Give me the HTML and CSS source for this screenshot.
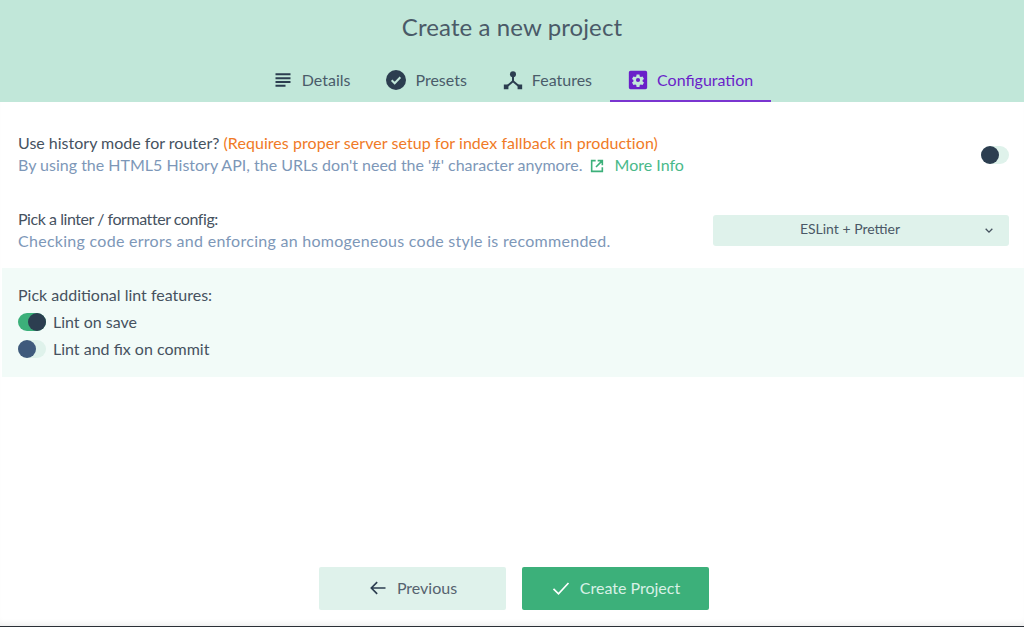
FILE: index.html
```html
<!DOCTYPE html>
<html lang="en">
<head>
    <meta charset="UTF-8">
    <title>Create a new project</title>
    <link rel="stylesheet" href="styles.css">
</head>
<body>

<header class="header">
    <h1 class="title">Create a new project</h1>
    <nav class="tabs">
        <div class="tab">
            <svg class="tab-icon" viewBox="0 0 24 24"><path d="M3 4h18v2.400H3zM3 8.600h18V11H3zM3 13.200h18v2.400H3zM3 17.800h12v2.400H3z"/></svg>
            <span>Details</span>
        </div>
        <div class="tab">
            <svg class="tab-icon" viewBox="0 0 24 24"><circle cx="12" cy="12" r="12"/><path class="tick" d="M6.800 12.300l3.600 3.600 6.800-7.200"/></svg>
            <span>Presets</span>
        </div>
        <div class="tab">
            <svg class="tab-icon" viewBox="0 0 24 24"><circle cx="12" cy="5" r="3.600"/><path d="M10.800 7h2.400v6l6 5-1.500 1.800L12 15l-5.700 4.800L4.800 18l6-5z"/><path d="M1 17.500h5.500V23H1zM17.500 17.500H23V23h-5.500z"/></svg>
            <span>Features</span>
        </div>
        <div class="tab active">
            <svg class="tab-icon" viewBox="0 0 24 24"><path fill-rule="evenodd" d="M3 1h18a2 2 0 0 1 2 2v18a2 2 0 0 1-2 2H3a2 2 0 0 1-2-2V3a2 2 0 0 1 2-2zm7.300 4.500l-.4 2.200-1.300.8-2.100-.8-1.700 3 1.700 1.400v1.600l-1.700 1.400 1.700 3 2.100-.8 1.300.8.4 2.200h3.400l.4-2.200 1.300-.8 2.100.8 1.700-3-1.700-1.400v-1.600l1.700-1.400-1.700-3-2.100.8-1.300-.8-.4-2.200zM12 9.500a2.500 2.500 0 1 1 0 5 2.500 2.500 0 0 1 0-5z"/></svg>
            <span>Configuration</span>
        </div>
    </nav>
</header>

<main class="content">
    <section class="row row-history">
        <div class="row-text">
            <p class="label">Use history mode for router? <span class="warn">(Requires proper server setup for index fallback in production)</span></p>
            <p class="desc">By using the HTML5 History API, the URLs don't need the '#' character anymore.
                <a class="more" href="#">
                    <svg class="more-icon" viewBox="0 0 24 24"><path d="M10 4H4v16h16v-6M13 4h7v7M20 4l-9.500 9.500"/></svg>
                    More Info
                </a>
            </p>
        </div>
        <div class="switch"><span class="knob"></span></div>
    </section>

    <section class="row row-linter">
        <div class="row-text">
            <p class="label">Pick a linter / formatter config:</p>
            <p class="desc">Checking code errors and enforcing an homogeneous code style is recommended.</p>
        </div>
        <div class="select">
            <span>ESLint + Prettier</span>
            <svg class="caret" viewBox="0 0 12 8"><path d="M2 2l4 4 4-4"/></svg>
        </div>
    </section>

    <section class="lint-group">
        <p class="label">Pick additional lint features:</p>
        <div class="check">
            <div class="switch on"><span class="knob"></span></div>
            <span>Lint on save</span>
        </div>
        <div class="check">
            <div class="switch muted"><span class="knob"></span></div>
            <span>Lint and fix on commit</span>
        </div>
    </section>
</main>

<footer class="footer">
    <button class="btn btn-light">
        <svg class="btn-icon" viewBox="0 0 24 24"><path d="M21 12H4M11 5l-7 7 7 7"/></svg>
        Previous
    </button>
    <button class="btn btn-primary">
        <svg class="btn-icon" viewBox="0 0 24 24"><path d="M3 13l6 6L21 6"/></svg>
        Create Project
    </button>
</footer>

</body>
</html>
```

FILE: styles.css
```css
:root {
    --dark: #2c3e50;
    --header-bg: #c1e7d9;
    --green: #3cb07a;
    --green-light: #dff2eb;
    --green-lighter: #f2fbf8;
    --purple: #6a1fc9;
    --blue-grey: #7d97b8;
    --orange: #f07a26;
}

* {
    margin: 0;
    padding: 0;
    box-sizing: border-box;
}

html, body {
    height: 627px;
    overflow: hidden;
}

body {
    display: flex;
    flex-direction: column;
    font-family: 'Lato', 'Open Sans', sans-serif;
    font-size: 16px;
    line-height: 22px;
    color: #46525f;
    background: #fff;
    border-bottom: 1px solid #2a2f36;
    box-shadow: inset 0 -6px 6px -4px rgba(0, 0, 0, 0.08);
}

.header {
    height: 102px;
    background: var(--header-bg);
    display: flex;
    flex-direction: column;
    align-items: center;
}

.title {
    font-size: 24px;
    font-weight: 400;
    line-height: 32px;
    letter-spacing: 0.1px;
    color: #4a5a68;
    margin-top: 11px;
}

.tabs {
    display: flex;
    margin-top: 18px;
    height: 41px;
    margin-left: 2px;
}

.tab {
    display: flex;
    align-items: center;
    gap: 9px;
    padding: 0 18px 2px;
    font-size: 16px;
    color: #4a5c6a;
    border-bottom: 2px solid transparent;
}

.tab-icon {
    width: 20px;
    height: 20px;
    fill: var(--dark);
}

.tick {
    fill: none;
    stroke: var(--header-bg);
    stroke-width: 2.400;
}

.tab.active {
    color: var(--purple);
    border-bottom-color: #7a35d0;
}

.tab.active .tab-icon {
    fill: var(--purple);
}

.content {
    flex: 1;
    display: flex;
    flex-direction: column;
}

.row {
    display: flex;
    align-items: center;
    justify-content: space-between;
    padding: 0 15px 0 18px;
}

.row-history {
    margin-top: 30px;
}

.row-history .switch {
    margin-top: 2px;
}

.row-linter {
    margin-top: 32px;
}

.row-linter .label {
    letter-spacing: -0.45px;
}

.row-linter .desc {
    letter-spacing: 0.28px;
}

.label {
    color: #46525f;
}

.warn {
    color: var(--orange);
    letter-spacing: 0.05px;
}

.desc {
    color: var(--blue-grey);
}

.more {
    color: #4ab98a;
    text-decoration: none;
    margin-left: 2px;
}

.more-icon {
    width: 16px;
    height: 16px;
    margin-right: 6px;
    vertical-align: -3px;
    fill: none;
    stroke: var(--green);
    stroke-width: 2.400;
}

.switch {
    position: relative;
    width: 28px;
    height: 18px;
    border-radius: 9px;
    background: var(--green-light);
    flex-shrink: 0;
}

.knob {
    position: absolute;
    left: 0;
    top: 0;
    width: 18px;
    height: 18px;
    border-radius: 50%;
    background: var(--dark);
}

.switch.on {
    background: var(--green);
}

.switch.on .knob {
    left: 10px;
}

.switch.muted .knob {
    background: #3f5a7c;
}

.select {
    position: relative;
    display: flex;
    align-items: center;
    justify-content: center;
    width: 296px;
    height: 31px;
    border-radius: 3px;
    background: var(--green-light);
    font-size: 14px;
    color: #4a5866;
    padding: 0 22px 2px 0;
}

.caret {
    position: absolute;
    right: 15px;
    top: 12px;
    width: 10px;
    height: 7px;
    fill: none;
    stroke: #46525f;
    stroke-width: 1.600;
}

.lint-group {
    margin: 16px 0 0 2px;
    height: 109px;
    padding: 16px 16px 0;
    background: var(--green-lighter);
}

.check {
    display: flex;
    align-items: center;
    gap: 7px;
    height: 27px;
}

.lint-group .label {
    margin-bottom: 2px;
}

.footer {
    display: flex;
    justify-content: center;
    gap: 16px;
    padding: 0 0 16px 4px;
}

.btn {
    display: flex;
    align-items: center;
    justify-content: center;
    gap: 9px;
    width: 187px;
    height: 43px;
    border: none;
    border-radius: 2px;
    font-family: inherit;
    font-size: 16px;
    padding-bottom: 2px;
}

.btn-light {
    background: var(--green-light);
    color: #56636f;
}

.btn-primary {
    background: var(--green);
    color: #d8f0e6;
}

.btn-icon {
    width: 20px;
    height: 20px;
    fill: none;
    stroke-width: 2;
}

.btn-light .btn-icon {
    stroke: var(--dark);
}

.btn-primary .btn-icon {
    stroke: #fff;
}
```
